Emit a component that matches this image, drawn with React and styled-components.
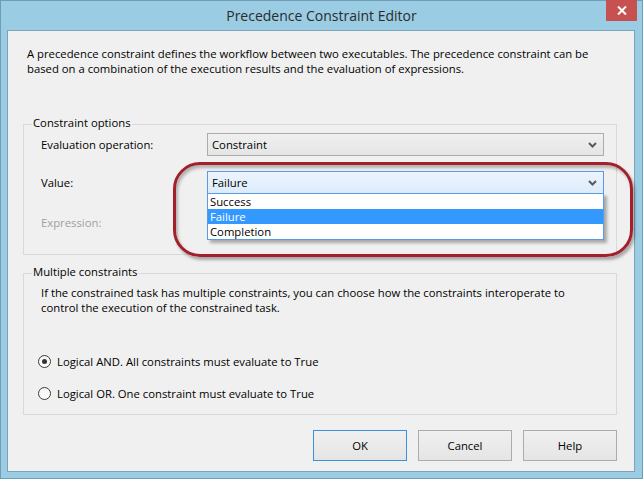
import React from "react";
import styled, { createGlobalStyle } from "styled-components";

const GlobalStyle = createGlobalStyle`
  html, body { margin: 0; padding: 0; }
  body {
    font-family: "Open Sans", "Liberation Sans", sans-serif;
    font-size: 11.3px;
    font-weight: 500;
    color: #000;
  }
  * { box-sizing: border-box; }
`;

const Window = styled.div`
  position: relative;
  width: 643px;
  height: 479px;
  background: #9acce3;
  border: 1px solid #6f9cb6;
  display: flex;
  flex-direction: column;
`;

const TitleBar = styled.div`
  height: 29px;
  flex-shrink: 0;
  display: grid;
  grid-template-columns: 1fr auto 1fr;
  align-items: start;
`;

const Title = styled.div`
  grid-column: 2;
  font-size: 14px;
  font-weight: 400;
  line-height: 29px;
  color: #2b2b2b;
`;

const CloseButton = styled.div`
  grid-column: 3;
  justify-self: end;
  width: 31px;
  height: 21px;
  margin: -1px 5px 0 0;
  background: #c75050;
  display: flex;
  align-items: center;
  justify-content: center;
`;

const Client = styled.div`
  height: 442px;
  margin: 0 7px 0 6px;
  border: 1px solid #7ea2b8;
  background: #f0f0f0;
  padding: 15px 17px 0 15px;
`;

const Intro = styled.p`
  margin: 0;
  padding-left: ${p => p.$indent || 0}px;
  line-height: 15px;
`;

const Group = styled.div`
  position: relative;
  margin-top: ${p => p.$top}px;
  border: 1px solid #d9d9d9;
  padding: ${p => p.$pad};
`;

const Legend = styled.span`
  position: absolute;
  top: -10px;
  left: 8px;
  padding: 0 1px;
  line-height: 16px;
  background: #f0f0f0;
`;

const OptionsGrid = styled.div`
  display: grid;
  grid-template-columns: 166px 1fr;
  grid-template-rows: repeat(3, 23px);
  row-gap: 15px;
  align-items: center;
`;

const Label = styled.div`
  color: ${p => (p.$disabled ? "#a0a0a0" : "#000")};
  padding-top: ${p => p.$shift || 0}px;
`;

const Combo = styled.div`
  position: relative;
  height: 23px;
  border: 1px solid ${p => (p.$open ? "#569de5" : "#acacac")};
  background: ${p =>
    p.$open
      ? "linear-gradient(#ecf4fc, #dcecfc)"
      : "linear-gradient(#f0f0f0, #e5e5e5)"};
  display: flex;
  align-items: center;
  justify-content: space-between;
  padding: 0 6px 0 4px;
  z-index: ${p => (p.$open ? 2 : "auto")};
`;

const DropList = styled.div`
  position: absolute;
  top: 100%;
  left: -1px;
  right: -1px;
  border: 1px solid #569de5;
  background: #fff;
  box-shadow: 3px 3px 3px rgba(0, 0, 0, 0.3);
`;

const DropItem = styled.div`
  height: 15px;
  line-height: 15px;
  padding-left: 2px;
  background: ${p => (p.$selected ? "#3399ff" : "transparent")};
  color: ${p => (p.$selected ? "#fff" : "#000")};
`;

const RadioList = styled.div`
  margin-top: 38px;
  display: flex;
  flex-direction: column;
  gap: 16px;
`;

const RadioRow = styled.label`
  display: flex;
  align-items: center;
  gap: 6px;
  height: 16px;
`;

const RadioCircle = styled.span`
  width: 13px;
  height: 13px;
  border-radius: 50%;
  border: 1px solid #3c3c3c;
  background: linear-gradient(#f4f4f4, #ffffff);
  display: flex;
  align-items: center;
  justify-content: center;
  &::after {
    content: "";
    width: 5px;
    height: 5px;
    border-radius: 50%;
    background: ${p => (p.$checked ? "#333" : "transparent")};
  }
`;

const ButtonRow = styled.div`
  margin-top: 15px;
  display: flex;
  justify-content: flex-end;
  gap: 11px;
`;

const Button = styled.div`
  width: 94px;
  height: 31px;
  border: 1px solid ${p => (p.$default ? "#3c8fe0" : "#acacac")};
  background: linear-gradient(#f0f0f0, #e5e5e5);
  display: flex;
  align-items: center;
  justify-content: center;
`;

const Highlight = styled.div`
  position: absolute;
  left: 172px;
  top: 161px;
  width: 460px;
  height: 95px;
  border: 3px solid #a3202a;
  border-radius: 27px;
  box-shadow: 2px 3px 3px rgba(0, 0, 0, 0.3), inset 2px 3px 3px rgba(0, 0, 0, 0.25);
  pointer-events: none;
  z-index: 5;
`;

function Chevron() {
  return (
    <svg width="9" height="6" viewBox="0 0 9 6">
      <polyline points="1,1 4.5,4.5 8,1" fill="none" stroke="#5a5a5a" strokeWidth="2" />
    </svg>
  );
}

const values = ["Success", "Failure", "Completion"];

export default function App() {
  return (
    <>
      <GlobalStyle />
      <Window>
        <TitleBar>
          <Title>Precedence Constraint Editor</Title>
          <CloseButton>
            <svg width="10" height="9" viewBox="0 0 10 9">
              <path d="M1 0.5 L9 8.5 M9 0.5 L1 8.5" stroke="#fff" strokeWidth="2" />
            </svg>
          </CloseButton>
        </TitleBar>
        <Client>
          <Intro $indent={4}>
            A precedence constraint defines the workflow between two executables. The precedence constraint can be
            <br />
            based on a combination of the execution results and the evaluation of expressions.
          </Intro>

          <Group $top={48} $pad="8px 12px 22px 17px">
            <Legend>Constraint options</Legend>
            <OptionsGrid>
              <Label>Evaluation operation:</Label>
              <Combo>
                <span>Constraint</span>
                <Chevron />
              </Combo>
              <Label>Value:</Label>
              <Combo $open>
                <span>Failure</span>
                <Chevron />
                <DropList>
                  {values.map(v => (
                    <DropItem key={v} $selected={v === "Failure"}>{v}</DropItem>
                  ))}
                </DropList>
              </Combo>
              <Label $disabled $shift={4}>Expression:</Label>
              <div />
            </OptionsGrid>
          </Group>

          <Group $top={18} $pad="11px 12px 13px 14px">
            <Legend>Multiple constraints</Legend>
            <Intro $indent={3}>
              If the constrained task has multiple constraints, you can choose how the constraints interoperate to
              <br />
              control the execution of the constrained task.
            </Intro>
            <RadioList>
              <RadioRow>
                <RadioCircle $checked />
                Logical AND. All constraints must evaluate to True
              </RadioRow>
              <RadioRow>
                <RadioCircle />
                Logical OR. One constraint must evaluate to True
              </RadioRow>
            </RadioList>
          </Group>

          <ButtonRow>
            <Button $default>OK</Button>
            <Button>Cancel</Button>
            <Button>Help</Button>
          </ButtonRow>
        </Client>
        <Highlight />
      </Window>
    </>
  );
}
